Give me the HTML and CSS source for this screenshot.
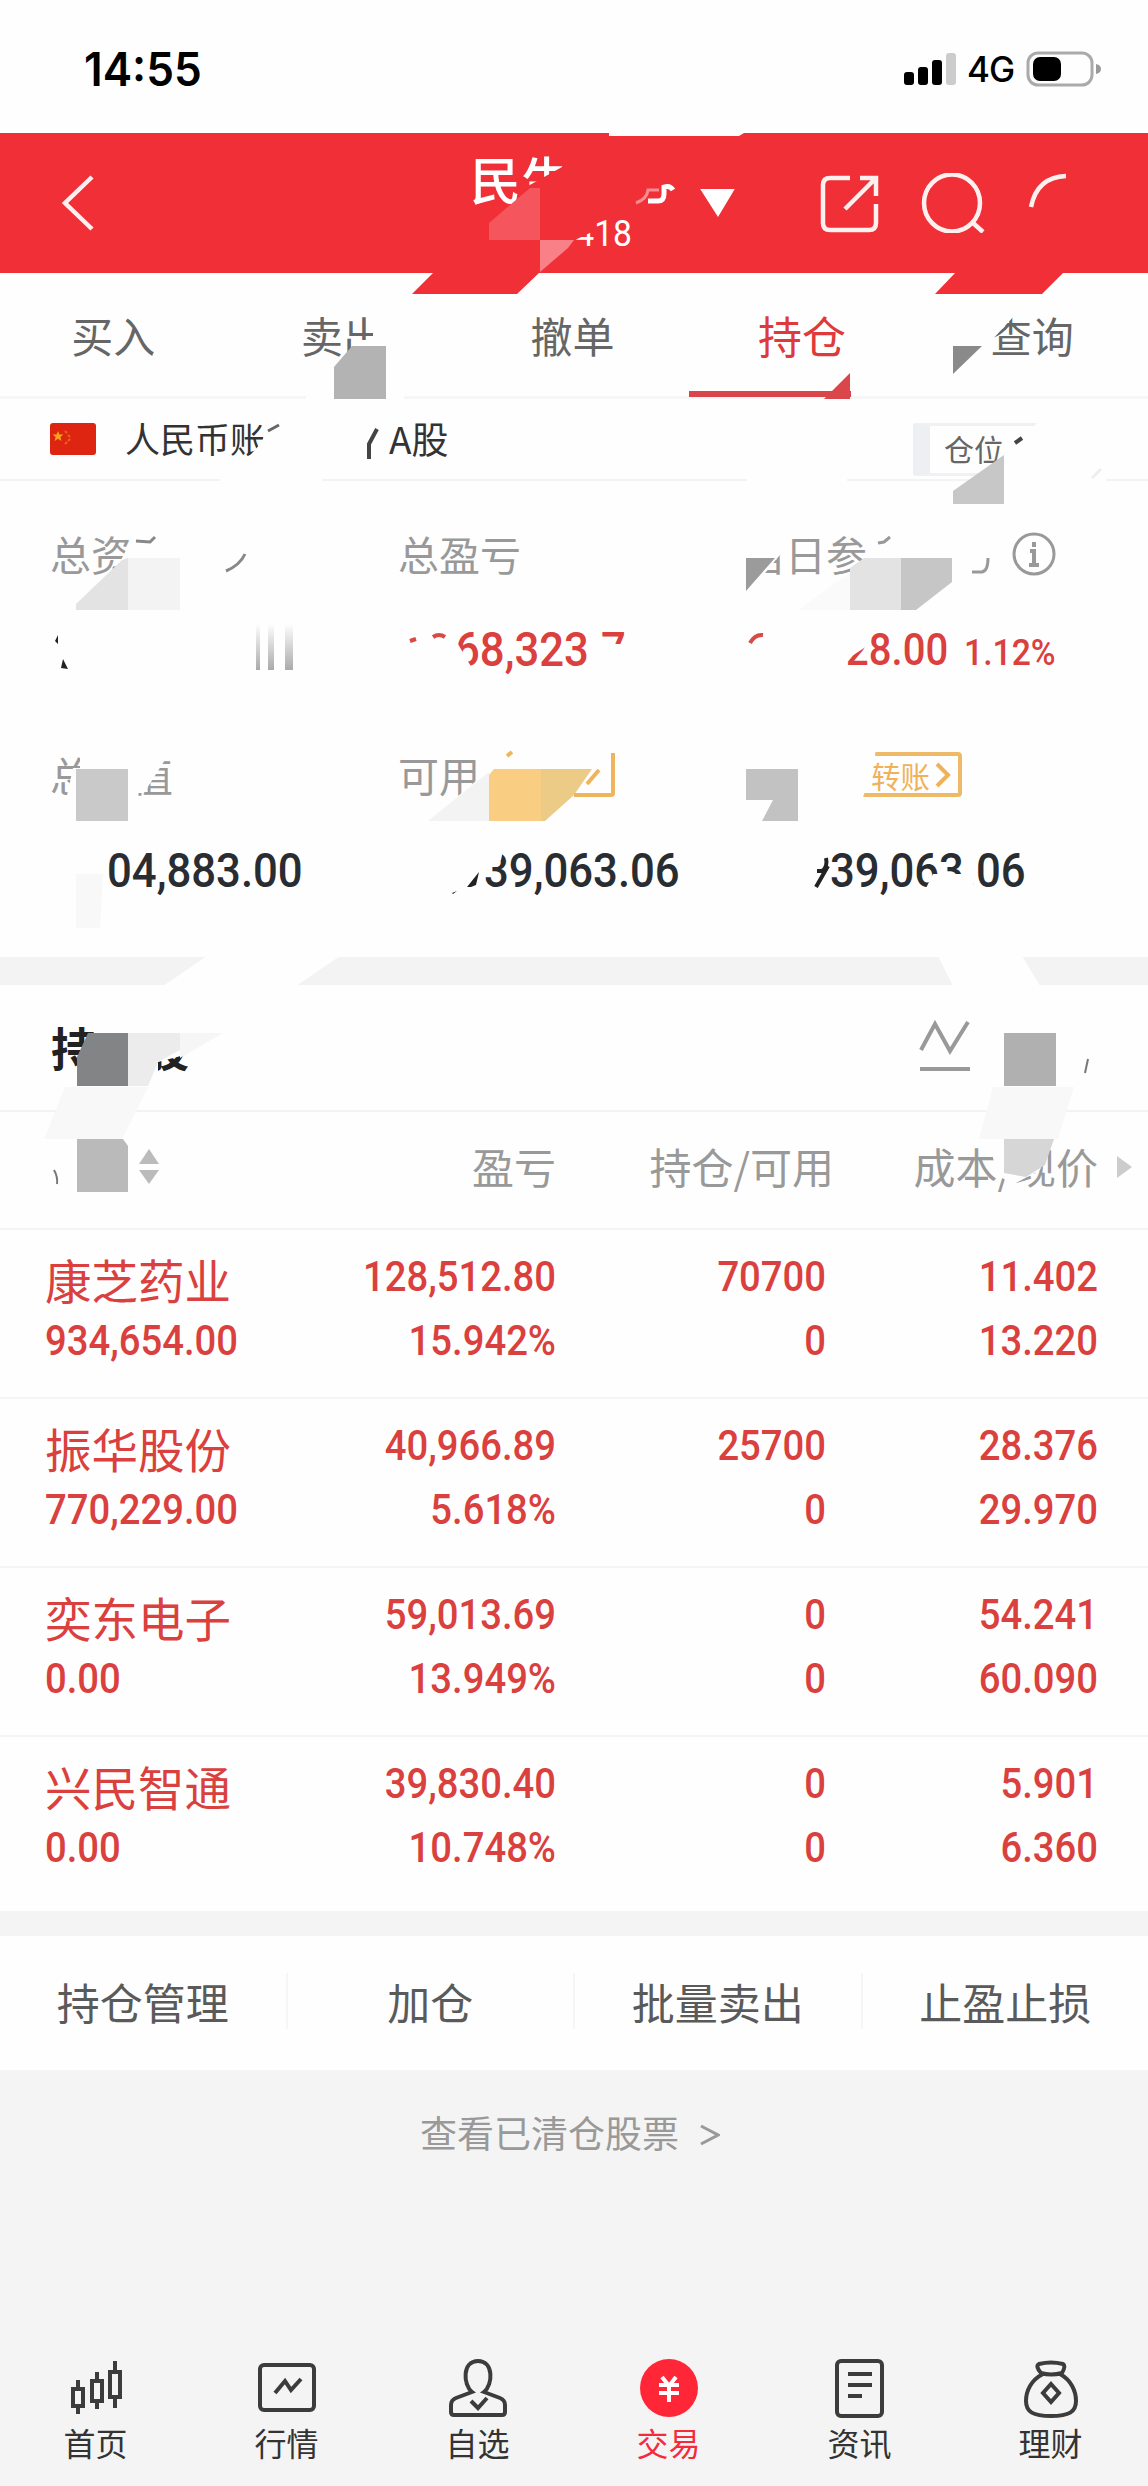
FILE: index.html
```html
<!DOCTYPE html>
<html lang="zh">
<head>
    <meta charset="UTF-8">
    <meta name="viewport" content="width=device-width, initial-scale=1.0">
    <title>持仓</title>
    <link rel="stylesheet" href="styles.css">
</head>
<body>
    <div class="page">
        <div class="status">
            <span class="time">14:55</span>
            <svg class="signal" width="52" height="34" viewBox="0 0 52 34">
                <rect x="0" y="20" width="10" height="13" rx="3"/>
                <rect x="14" y="15" width="10" height="18" rx="3"/>
                <rect x="28" y="8" width="10" height="25" rx="3"/>
                <rect x="42" y="1" width="10" height="32" rx="3" fill="#ccc"/>
            </svg>
            <span class="net">4G</span>
            <svg class="battery" width="76" height="36" viewBox="0 0 76 36">
                <rect x="2" y="2" width="64" height="32" rx="10" fill="none" stroke="#aaa" stroke-width="3"/>
                <rect x="7" y="6" width="28" height="24" rx="7"/>
                <path d="M70 13q5 1 5 5t-5 5z" fill="#999"/>
            </svg>
        </div>

        <div class="header">
            <svg class="back" width="40" height="60" viewBox="0 0 40 60">
                <path d="M32 4L5 30l27 26"/>
            </svg>
            <div class="title">
                <div class="broker">民生</div>
                <div class="account"><span class="num">418</span></div>
            </div>
            <svg class="tools" width="380" height="60" viewBox="0 0 380 60">
                <path d="M14 17h31L30 42z" fill="#fff" stroke="#fff" stroke-width="2"/>
                <path d="M162 5h-20q-7 0-7 7v38q0 7 7 7h39q7 0 7-7V31M157 36L187 6M172 5h16v18"/>
                <ellipse cx="264" cy="30" rx="28" ry="28.5"/>
                <path d="M284 49l11 10M343 34Q349 4 378 3"/>
            </svg>
        </div>

        <div class="tabs">
            <div>买入</div>
            <div>卖出</div>
            <div>撤单</div>
            <div class="active">持仓</div>
            <div>查询</div>
        </div>

        <div class="market">
            <svg class="flag" width="46" height="32" viewBox="0 0 46 32">
                <rect width="46" height="32" rx="3" fill="#dd2511"/>
                <path d="M8 8l1.400 3.500h4l-3 2.500 1 4-3.400-2.300L4.600 18l1-4-3-2.500h4z" fill="#f9a51a"/>
                <path d="M15 8l2 2M18 12l2 2M18 18l2-2M15 21l2-2" stroke="#e8641a" stroke-width="2"/>
            </svg>
            <span class="currency">人民币账户</span>
            <span class="a-share">A股</span>
            <span class="badge">仓位</span>
        </div>

        <div class="stats">
            <div class="stat">
                <div class="label">总资产</div>
                <div class="value"></div>
            </div>
            <div class="stat">
                <div class="label">总盈亏</div>
                <div class="value red in-s"><span class="num">68,323.7</span></div>
            </div>
            <div class="stat">
                <div class="label wide">当日参考盈亏
                    <svg width="44" height="44" viewBox="0 0 44 44">
                        <circle cx="22" cy="22" r="20" fill="none" stroke="#999" stroke-width="3"/>
                        <path d="M22 10v5M18 19h4v14M17 33h10" fill="none" stroke="#999" stroke-width="4"/>
                    </svg>
                </div>
                <div class="value red in-l"><span class="num today">28.00</span><span class="num rate">1.12%</span></div>
            </div>
            <div class="stat">
                <div class="label">总市值</div>
                <div class="value in-s"><span class="num">04,883.00</span></div>
            </div>
            <div class="stat">
                <div class="label">可用</div>
                <div class="value in-m"><span class="num">39,063.06</span></div>
            </div>
            <div class="stat">
                <div class="label"><span class="transfer">转账
                    <svg width="16" height="26" viewBox="0 0 16 26"><path d="M2 2l11 11L2 24"/></svg>
                </span></div>
                <div class="value in-m"><span class="num">39,063.06</span></div>
            </div>
        </div>

        <div class="band"></div>

        <div class="holdings">
            <h2>持仓股</h2>
            <svg width="52" height="52" viewBox="0 0 52 52">
                <path d="M2 30L16 4l15 27L49 2M1 49h50"/>
            </svg>
        </div>

        <div class="row head">
            <div class="sort">
                <svg width="20" height="36" viewBox="0 0 20 36"><path d="M10 0l10 15H0zM0 21h20L10 35z"/></svg>
            </div>
            <div>盈亏</div>
            <div class="shift">持仓/可用</div>
            <div>成本/现价</div>
            <svg class="more" width="16" height="22" viewBox="0 0 16 22"><path d="M0 0l15 11L0 22z"/></svg>
        </div>

        <div class="row">
            <div class="name">康芝药业<span class="num">934,654.00</span></div>
            <div><span class="num">128,512.80</span><span class="num">15.942%</span></div>
            <div><span class="num">70700</span><span class="num">0</span></div>
            <div><span class="num">11.402</span><span class="num">13.220</span></div>
        </div>
        <div class="row">
            <div class="name">振华股份<span class="num">770,229.00</span></div>
            <div><span class="num">40,966.89</span><span class="num">5.618%</span></div>
            <div><span class="num">25700</span><span class="num">0</span></div>
            <div><span class="num">28.376</span><span class="num">29.970</span></div>
        </div>
        <div class="row">
            <div class="name">奕东电子<span class="num">0.00</span></div>
            <div><span class="num">59,013.69</span><span class="num">13.949%</span></div>
            <div><span class="num">0</span><span class="num">0</span></div>
            <div><span class="num">54.241</span><span class="num">60.090</span></div>
        </div>
        <div class="row last">
            <div class="name">兴民智通<span class="num">0.00</span></div>
            <div><span class="num">39,830.40</span><span class="num">10.748%</span></div>
            <div><span class="num">0</span><span class="num">0</span></div>
            <div><span class="num">5.901</span><span class="num">6.360</span></div>
        </div>

        <div class="actions">
            <div>持仓管理</div>
            <div>加仓</div>
            <div>批量卖出</div>
            <div>止盈止损</div>
        </div>

        <div class="cleared">查看已清仓股票
            <svg width="20" height="22" viewBox="0 0 20 22"><path d="M1 2l17 9L1 20"/></svg>
        </div>

        <div class="nav">
            <div>
                <svg width="60" height="60" viewBox="0 0 60 60">
                    <path d="M7 31h10v17H7zM12 22v9M12 48v8M26 23h10v20H26zM31 14v9M31 43v8M44 14h10v25H44zM49 3v11M49 39v11"/>
                </svg>
                首页
            </div>
            <div>
                <svg width="60" height="60" viewBox="0 0 60 60">
                    <rect x="3" y="7" width="54" height="45" rx="4"/>
                    <path d="M18 35l10-12 6 9 10-11"/>
                </svg>
                行情
            </div>
            <div>
                <svg width="60" height="60" viewBox="0 0 60 60">
                    <path d="M24 34C15 27 14 3 30 3S45 27 36 34L52 40Q57 42 57 47V54Q57 57 54 57H6Q3 57 3 54V47Q3 42 8 40L24 34zM23 43l7 7 9-10"/>
                </svg>
                自选
            </div>
            <div class="active">
                <svg width="60" height="60" viewBox="0 0 60 60">
                    <circle class="coin" cx="30" cy="30" r="29"/>
                    <path class="yen" d="M23 19l7 9 7-9M20 27h20M20 35h20M30 27v17"/>
                </svg>
                交易
            </div>
            <div>
                <svg width="60" height="60" viewBox="0 0 60 60">
                    <rect x="7" y="3" width="45" height="55" rx="4"/>
                    <path d="M18 16h24M18 27h24M18 38h14"/>
                </svg>
                资讯
            </div>
            <div>
                <svg width="60" height="60" viewBox="0 0 60 60">
                    <path d="M18 6Q30 3 42 6Q45 8 41 15Q30 18 20 15Q14 8 18 6zM22 16C10 22 5 33 5 43C5 54 12 58 30 58S55 54 55 43C55 33 50 22 39 16M30 26l8 9-8 9-8-9z"/>
                </svg>
                理财
            </div>
        </div>

        <!-- privacy smudges drawn over the account data -->
        <svg class="smudge" width="1148" height="2486" viewBox="0 0 1148 2486">
            <!-- header -->
            <g fill="#f02f37">
                <path d="M434 272l-22 22h105l23-22zM956 272l-21 22h107l22-22z"/>
                <path d="M506 214l22-28 34-19 3-20h30v67zM553 214h44l-5 18-17 8h-22zM553 237h23v16h-23z"/>
            </g>
            <path d="M609 133h135l-5 3H609z" fill="#fefefe"/>
            <path d="M489 240v-17l41-35h10v52z" fill="#f5555c"/>
            <path d="M540 240h34l-6 8-28 24z" fill="#f98087"/>
            <path d="M636 203q11-4 12-13h11" fill="none" stroke="#f78c91" stroke-width="3"/>
            <path d="M648 201h10q6 0 6-7v-7q6-2 9 3" fill="none" stroke="#fff" stroke-width="5"/>

            <!-- tabs -->
            <path d="M373 314h20v64h-38v-38h18zM985 315h30l-23 25z" fill="#fefefe"/>
            <path d="M334 399v-32l18-21h34v53z" fill="#b3b3b3"/>
            <path d="M306 395h28v6h-28zM386 395h18v6h-18z" fill="#fefefe"/>
            <path d="M953 346h29l-29 28z" fill="#8a8a8a"/>
            <path d="M850 373v26h-26z" fill="#db464b"/>

            <!-- market row -->
            <path d="M262 442l8-22h40v42h-66z" fill="#fefefe"/>
            <path d="M268 431l11-6" stroke="#666" stroke-width="3"/>
            <path d="M377 429l-8 15v15" fill="none" stroke="#444" stroke-width="4"/>
            <path d="M220 478h102v5H220zM747 478h100v5H747z" fill="#fefefe"/>
            <path d="M1000 462l40-42h66v68h-102z" fill="#fefefe"/>
            <path d="M953 504v-13l51-36v49z" fill="#c7c7c7"/>
            <path d="M1015 443l7-5" stroke="#444" stroke-width="4"/>
            <path d="M1092 478l9-9" stroke="#eee" stroke-width="3"/>

            <!-- first stats row -->
            <path d="M120 562l15-30h45v50h-60z" fill="#fefefe"/>
            <path d="M136 541l14 1 5-5M226 571q14-6 19-17" fill="none" stroke="#888" stroke-width="3"/>
            <path d="M76 610v-6l46-44 6-2v52z" fill="#e3e3e3"/>
            <path d="M128 558h52v52h-52z" fill="#f3f3f3"/>
            <path d="M740 530h44v20l-38 46h-6zM866 562l6-30h122v20l-10 12-4 12H860z" fill="#fefefe"/>
            <path d="M746 558h29l-29 33z" fill="#9b9b9b"/>
            <path d="M798 610l52-37v37z" fill="#fafafa"/>
            <path d="M850 610v-42l14-10h37v52z" fill="#e3e3e3"/>
            <path d="M901 558h51v24l-36 28h-15z" fill="#c6c6c6"/>
            <path d="M878 543l6-1 6-5M972 572h10q6-1 6-14" fill="none" stroke="#999" stroke-width="3"/>
            <defs>
                <linearGradient id="fade" x1="0" y1="0" x2="0" y2="1">
                    <stop offset="0" stop-color="#fefefe"/>
                    <stop offset="1" stop-color="#aaa"/>
                </linearGradient>
            </defs>
            <path d="M256 624h4v46h-4zM268 624h6v46h-6zM285 624h8v46h-8z" fill="url(#fade)"/>
            <path d="M55 641l3-6v9zM61 668l2-9 5 10z" fill="#222"/>
            <path d="M450 630h9l-1 14 15 26h-23zM590 656l10-12h26v32h-36zM843 628h24v18l-18 12h-6z" fill="#fefefe"/>
            <path d="M410 641l6-2M433 637q6-4 12 0M750 643q5-9 13-8" fill="none" stroke="#d94a46" stroke-width="4"/>

            <!-- second stats row -->
            <path d="M80 752h50v48H80zM73 768h8v32H66zM128 752h42l-26 41h-16z" fill="#fefefe"/>
            <path d="M76 769h52v52H76z" fill="#c9c9c9"/>
            <path d="M458 796l31-26v26z" fill="#fefefe"/>
            <path d="M428 821l61-49v49z" fill="#f3f3f3"/>
            <path d="M489 821v-46l5-6h47v52z" fill="#f9cd82"/>
            <path d="M541 769h51l-18 26-29 26h-4z" fill="#ebcb85"/>
            <path d="M574 795h37q2 0 2-2v-40M587 784l12-14M507 756l5-4" fill="none" stroke="#f0b45c" stroke-width="4"/>
            <path d="M746 769h52v52h-36l11-21h-27z" fill="#c2c2c2"/>
            <path d="M840 746h36l-2 20-12 34h-22z" fill="#fefefe"/>
            <path d="M76 874h27l-3 54H76z" fill="#f8f8f8"/>
            <path d="M482 846h22l-3 14-20 16zM926 888l7-14h29l6 22zM962 872h11v20h-11z" fill="#fefefe"/>
            <path d="M467 887l12-15-3 13-5 2zM452 893l5-2-4 3z" fill="#222"/>
            <path d="M826 858q2 9-4 13h-5M828 866l-12 21" fill="none" stroke="#222" stroke-width="4"/>
            <path d="M207 956h133l-44 30H163zM938 956h84l18 30h-87z" fill="#fefefe"/>

            <!-- holdings heading -->
            <path d="M94 1022h102v30l-38 10v14H94z" fill="#fefefe"/>
            <path d="M77 1086v-29l11-24h40v53z" fill="#838486"/>
            <path d="M128 1033h52v17l-22 12-10 24h-20z" fill="#ececec"/>
            <path d="M180 1033h43l-43 25z" fill="#f6f6f6"/>
            <path d="M65 1087h83l-26 52H44zM993 1087h81l-16 52h-79z" fill="#f8f8f8"/>
            <path d="M1004 1033h52v53h-52z" fill="#b0b0b0"/>
            <path d="M1085 1073l3-14" stroke="#777" stroke-width="2"/>

            <!-- table head -->
            <path d="M77 1192v-53h46l5 7v46z" fill="#bababa"/>
            <path d="M54 1170q4 7 3 14" fill="none" stroke="#777" stroke-width="2"/>
            <path d="M988 1140h64l-12 30-26 14-16-8z" fill="#fefefe"/>
            <path d="M1004 1139h50l-9 26-19 12-22-4z" fill="#d6d6d6"/>
        </svg>
    </div>
</body>
</html>
```
FILE: styles.css
```css
* {
    box-sizing: border-box;
}
body {
    margin: 0;
    background: #f4f4f4;
    font-family: "Noto Sans CJK SC", sans-serif;
    color: #333;
}
svg {
    flex: none;
}
.page {
    position: relative;
    width: 1148px;
    height: 2486px;
    overflow: hidden;
    display: flex;
    flex-direction: column;
}
.page > div {
    flex: none;
}

/* condensed figures */
.num {
    display: block;
    font-family: Roboto, sans-serif;
    font-weight: 500;
    transform: scaleX(0.91);
    transform-origin: right center;
}

.status {
    height: 133px;
    background: #fefefe;
    display: flex;
    align-items: center;
    padding: 4px 46px 0 84px;
    font-family: Inter, sans-serif;
    color: #000;
}
.time {
    font-size: 46px;
    font-weight: 600;
    transform: scaleX(0.96);
    transform-origin: left center;
    margin-right: auto;
}
.net {
    font-size: 35px;
    font-weight: 500;
    margin: 0 14px 0 11px;
    width: 45px;
    letter-spacing: -1px;
}

.header {
    height: 140px;
    background: #f02f37;
    color: #fff;
    display: flex;
    align-items: center;
    padding-left: 60px;
}
.header svg {
    fill: none;
    stroke: #fff0f0;
    stroke-width: 4.5;
}
.title {
    width: 218px;
    margin-left: 370px;
    height: 140px;
    padding-top: 12px;
}
.broker {
    font-size: 51px;
    font-weight: 500;
    line-height: 66px;
}
.account {
    font-size: 37px;
    line-height: 46px;
    text-align: right;
    padding-right: 56px;
}
.account .num {
    font-weight: 400;
}

.tabs {
    height: 126px;
    background: #fefefe;
    border-bottom: 3px solid #f6f6f6;
    display: flex;
    font-size: 42px;
    color: #666;
}
.tabs div {
    flex: 1;
    text-align: center;
    line-height: 126px;
    height: 126px;
    margin-top: -1px;
    padding-right: 3px;
}
.tabs .active {
    font-size: 44px;
    color: #e0393b;
    background: linear-gradient(#da454b, #da454b) 0 119px / 162px 6px no-repeat;
}

.market {
    height: 82px;
    background: #fefefe;
    display: flex;
    align-items: center;
    padding: 0 50px;
    border-bottom: 2px solid #f3f3f3;
    font-size: 35px;
    line-height: 50px;
}
.currency {
    margin: -2px 0 0 29px;
    width: 264px;
}
.a-share {
    font-size: 37px;
    margin-top: -3px;
}
.badge {
    margin-left: auto;
    width: 171px;
    height: 53px;
    border: 3px solid #f0f1f4;
    border-left: 17px solid #eeeff2;
    border-radius: 3px;
    padding-left: 14px;
    margin-right: 14px;
    margin-top: 20px;
    line-height: 44px;
    font-size: 30px;
    color: #666;
}

.stats {
    height: 476px;
    background: #fefefe;
    padding: 44px 0 0 50px;
    display: grid;
    grid-template-columns: 348px 346px 1fr;
    grid-template-rows: 221px 221px;
}
.label {
    height: 56px;
    line-height: 56px;
    font-size: 41px;
    color: #999;
    margin-bottom: 39px;
}
.wide {
    display: flex;
    align-items: center;
}
.wide svg {
    margin-left: 22px;
    margin-top: 1px;
}
.value {
    height: 60px;
    line-height: 60px;
    font-size: 48px;
    color: #292c31;
    white-space: nowrap;
    display: flex;
    align-items: baseline;
}
.value .num {
    transform-origin: left center;
}
.in-s { padding-left: 57px; }
.in-m { padding-left: 86px; }
.in-l { padding-left: 102px; }
.red {
    color: #da403d;
}
.value .today {
    font-size: 44px;
}
.value .rate {
    font-size: 37px;
    margin-left: 6px;
}
.transfer {
    display: flex;
    align-items: center;
    width: 117px;
    height: 45px;
    margin-left: 101px;
    border: 4px solid #efba68;
    border-radius: 4px;
    padding-left: 22px;
    font-size: 29.5px;
    color: #f0b258;
}
.transfer svg {
    margin-left: 5px;
    fill: none;
    stroke: #f0b258;
    stroke-width: 4;
}
.stat:last-child .label {
    padding-top: 6px;
}

.band {
    height: 28px;
    background: #f3f3f3;
}

.holdings {
    height: 127px;
    background: #fefefe;
    border-bottom: 2px solid #f3f3f3;
    display: flex;
    align-items: center;
    padding: 0 177px 3px 51px;
}
.holdings h2 {
    margin: 0 auto 0 0;
    font-size: 46px;
    font-weight: 700;
    color: #222;
}
.holdings svg {
    fill: none;
    stroke: #999;
    stroke-width: 4;
}

.row {
    height: 169px;
    background: #fefefe;
    border-bottom: 2px solid #f4f4f4;
    display: grid;
    grid-template-columns: 210px 300px 270px 272px;
    padding: 15px 0 0 46px;
    text-align: right;
    font-size: 42px;
    line-height: 64px;
    color: #da403d;
}
.row .name {
    text-align: left;
    font-size: 46.5px;
    line-height: 58px;
    padding-top: 5px;
    margin-left: -1px;
}
.name .num {
    font-size: 42px;
    line-height: 66px;
    transform-origin: left center;
}
.head {
    height: 118px;
    grid-template-columns: 210px 300px 278px 264px 50px;
    padding-top: 22px;
    color: #999;
}
.sort {
    text-align: left;
    padding-left: 93px;
}
.sort svg {
    display: block;
    margin-top: 15px;
    fill: #bbb;
}
.more {
    margin: 22px 0 0 19px;
    fill: #ccc;
}
.last {
    height: 174px;
    border-bottom: none;
}

.actions {
    margin-top: 25px;
    height: 134px;
    background: #fefefe;
    display: flex;
    align-items: center;
    padding-bottom: 4px;
}
.actions div {
    flex: 1;
    text-align: center;
    font-size: 43px;
    line-height: 56px;
    color: #5a5a5a;
    border-right: 2px solid #f6f6f6;
}
.actions div:last-child {
    border-right: none;
}

.cleared {
    height: 269px;
    padding: 34px 8px 0 0;
    display: flex;
    justify-content: center;
    font-size: 37px;
    line-height: 56px;
    color: #999;
}
.cleared svg {
    margin: 20px 0 0 21px;
    fill: none;
    stroke: #999;
    stroke-width: 3;
}

.nav {
    height: 149px;
    display: flex;
    padding: 19px 2px 0 0;
}
.nav div {
    flex: 1;
    display: flex;
    flex-direction: column;
    align-items: center;
    font-size: 32px;
    line-height: 48px;
}
.nav svg {
    fill: none;
    stroke: #3c3c3c;
    stroke-width: 4;
}
.nav .active {
    color: #f52b3b;
}
.nav .coin {
    fill: #ff2638;
    stroke: none;
}
.nav .yen {
    stroke: #fff;
}

.smudge {
    position: absolute;
    left: 0;
    top: 0;
    pointer-events: none;
}
```
